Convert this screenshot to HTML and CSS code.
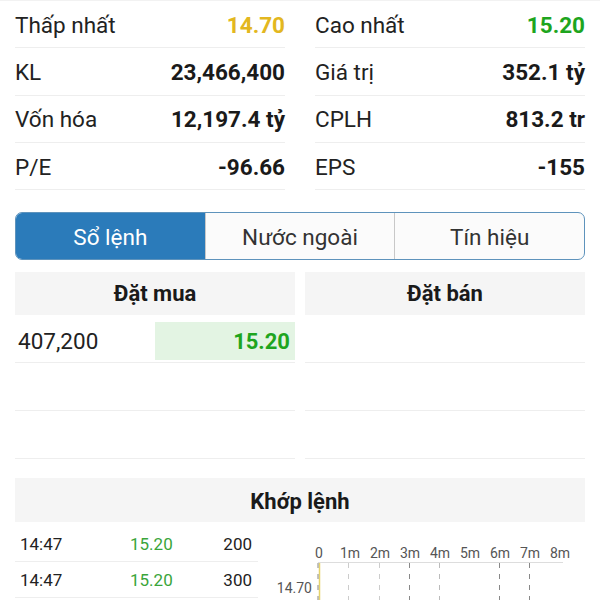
FILE: index.html
```html
<!DOCTYPE html>
<html>
<head>
<meta charset="utf-8">
<link rel="stylesheet" href="styles.css">
</head>
<body>
<div class="stats">
  <div class="col">
    <div class="row"><span class="lbl">Thấp nhất</span><span class="val yellow">14.70</span></div>
    <div class="row"><span class="lbl">KL</span><span class="val">23,466,400</span></div>
    <div class="row"><span class="lbl">Vốn hóa</span><span class="val">12,197.4 tỷ</span></div>
    <div class="row"><span class="lbl">P/E</span><span class="val">-96.66</span></div>
  </div>
  <div class="col">
    <div class="row"><span class="lbl">Cao nhất</span><span class="val green">15.20</span></div>
    <div class="row"><span class="lbl">Giá trị</span><span class="val">352.1 tỷ</span></div>
    <div class="row"><span class="lbl">CPLH</span><span class="val">813.2 tr</span></div>
    <div class="row"><span class="lbl">EPS</span><span class="val">-155</span></div>
  </div>
</div>

<div class="tabs">
  <div class="tab active">Sổ lệnh</div>
  <div class="tab">Nước ngoài</div>
  <div class="tab">Tín hiệu</div>
</div>

<div class="book">
  <div class="side">
    <div class="bhead">Đặt mua</div>
    <div class="brow"><span class="qty">407,200</span><span class="price">15.20</span></div>
    <div class="brow"></div>
    <div class="brow"></div>
  </div>
  <div class="side">
    <div class="bhead">Đặt bán</div>
    <div class="brow"></div>
    <div class="brow"></div>
    <div class="brow"></div>
  </div>
</div>

<div class="mhead">Khớp lệnh</div>

<div class="matches">
  <div class="list">
    <div class="trow"><span class="t">14:47</span><span class="p">15.20</span><span class="q">200</span></div>
    <div class="trow"><span class="t">14:47</span><span class="p">15.20</span><span class="q">300</span></div>
  </div>
  <svg class="chart" width="323" height="78" viewBox="0 0 323 78">
    <g font-family="Roboto, sans-serif" font-size="14" fill="#555" text-anchor="middle">
      <text x="57" y="36">0</text>
      <text x="88" y="36">1m</text>
      <text x="118" y="36">2m</text>
      <text x="148" y="36">3m</text>
      <text x="178" y="36">4m</text>
      <text x="208" y="36">5m</text>
      <text x="238" y="36">6m</text>
      <text x="268" y="36">7m</text>
      <text x="298" y="36">8m</text>
    </g>
    <line x1="56" y1="40.5" x2="301" y2="40.5" stroke="#ddd" stroke-width="1"/>
    <g stroke-width="1" stroke-dasharray="5 6">
      <line x1="86.5" y1="41" x2="86.5" y2="78" stroke="#ccc"/>
      <line x1="117.5" y1="41" x2="117.5" y2="78" stroke="#ccc"/>
      <line x1="147.5" y1="41" x2="147.5" y2="78" stroke="#888"/>
      <line x1="177.5" y1="41" x2="177.5" y2="78" stroke="#bbb"/>
      <line x1="237.5" y1="41" x2="237.5" y2="78" stroke="#888"/>
      <line x1="267.5" y1="41" x2="267.5" y2="78" stroke="#888"/>
    </g>
    <line x1="57.5" y1="41" x2="57.5" y2="78" stroke="#e6d36a" stroke-width="1.5"/>
    <line x1="56" y1="41" x2="56" y2="78" stroke="#888" stroke-width="1" stroke-dasharray="5 6"/>
    <text x="50" y="71" font-family="Roboto, sans-serif" font-size="14" fill="#555" text-anchor="end">14.70</text>
  </svg>
</div>
</body>
</html>
```
FILE: styles.css
```css
* { box-sizing: border-box; }
html, body {
  margin: 0;
  padding: 0;
  background: #fff;
  font-family: Roboto, "Noto Sans", sans-serif;
  color: #222;
  overflow: hidden;
}
.stats {
  display: grid;
  grid-template-columns: 1fr 1fr;
  column-gap: 30px;
  padding: 0 15px;
  border-top: 1px solid #f2f2f2;
}
.row {
  height: 47.33px;
  display: flex;
  justify-content: space-between;
  align-items: center;
  border-bottom: 1px solid #eee;
  font-size: 22.5px;
  padding-top: 1px;
}
.lbl { color: #222; }
.val { font-weight: 700; color: #1a1a1a; }
.yellow { color: #e3b720; }
.green { color: #1ea51e; }

.tabs {
  margin: 22px 15px 0;
  height: 48px;
  display: flex;
  border: 1.5px solid #5e93bc;
  border-radius: 7px;
  overflow: hidden;
  background: #fbfbfb;
}
.tab {
  flex: 1;
  display: flex;
  align-items: center;
  justify-content: center;
  font-size: 22.5px;
  color: #333;
  border-left: 1px solid #c8c8c8;
  padding-top: 1px;
}
.tab:first-child { border-left: none; }
.tab.active {
  background: #2b7bba;
  color: #fff;
}

.book {
  margin: 12px 15px 0;
  display: grid;
  grid-template-columns: 1fr 1fr;
  column-gap: 10px;
}
.bhead {
  height: 43px;
  background: #f5f5f5;
  display: flex;
  align-items: center;
  justify-content: center;
  font-size: 22px;
  font-weight: 700;
  color: #1a1a1a;
}
.brow {
  height: 48px;
  border-bottom: 1px solid #eee;
  display: grid;
  grid-template-columns: 1fr 1fr;
  align-items: start;
  padding-top: 7px;
}
.qty {
  height: 38px;
  display: flex;
  align-items: center;
  padding-left: 3px;
  font-size: 22.5px;
  color: #222;
}
.price {
  height: 38px;
  display: flex;
  align-items: center;
  justify-content: flex-end;
  padding-right: 5px;
  background: #e3f4e3;
  font-size: 22px;
  font-weight: 700;
  color: #1ea51e;
}

.mhead {
  margin: 19px 15px 0;
  height: 44px;
  background: #f5f5f5;
  display: flex;
  align-items: center;
  justify-content: center;
  font-size: 22px;
  font-weight: 700;
  color: #1a1a1a;
  padding-top: 3px;
}

.matches {
  display: flex;
  padding-left: 15px;
}
.list {
  width: 243px;
  padding-top: 4px;
}
.trow {
  height: 36px;
  display: grid;
  grid-template-columns: 110px 1fr auto;
  align-items: center;
  padding: 0 6px 0 5px;
  border-bottom: 1px solid #eee;
  font-size: 17px;
  color: #222;
}
.trow .p { color: #3aa53a; }
.chart {
  display: block;
  margin-left: 4px;
}
```
